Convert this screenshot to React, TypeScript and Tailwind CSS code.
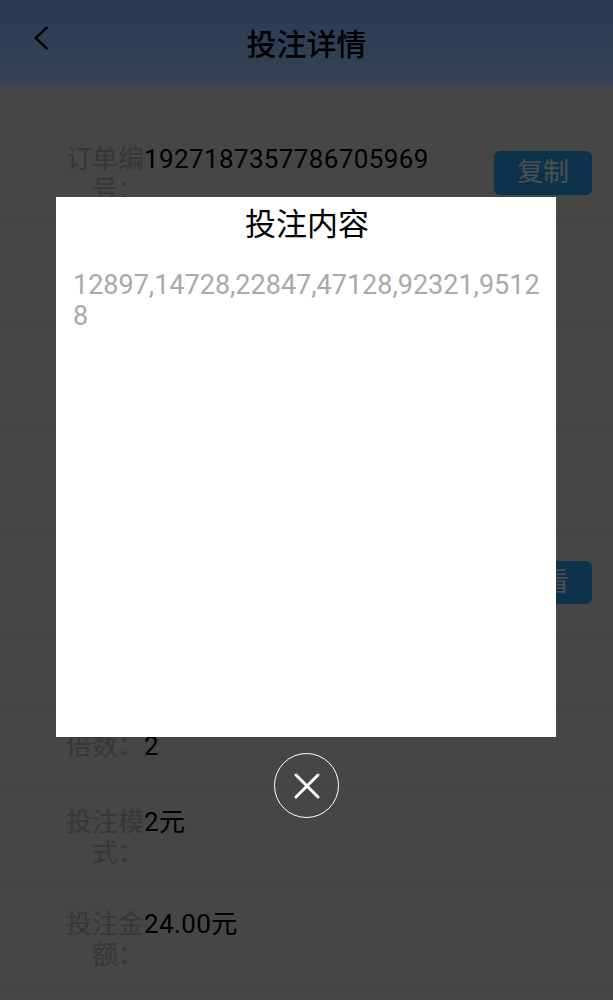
import React from 'react';

const FONT = 'font-["Roboto","Noto_Sans_CJK_SC",sans-serif]';

type RowProps = {
  label: string;
  value?: string;
  action?: string;
  tall?: boolean;
};

const rows: RowProps[] = [
  { label: '订单编号：', value: '1927187357786705969', action: '复制', tall: true },
  { label: '投注时间：', value: '2025-05-21 10:12:30', tall: true },
  { label: '彩种名称：', value: '腾讯分分彩', tall: true },
  { label: '玩法名称：', value: '五星直选', tall: true },
  { label: '投注内容：', value: '12897,14728', action: '查看', tall: true },
  { label: '注数：', value: '6' },
  { label: '倍数：', value: '2' },
  { label: '投注模式：', value: '2元', tall: true },
  { label: '投注金额：', value: '24.00元', tall: true },
];

const Row = ({ label, value, action, tall }: RowProps) => (
  <div className={`flex items-start border-b border-[#bcbcbc] pl-[65px] pr-[21px] pt-[22px] ${tall ? 'h-[102.4px]' : 'h-[75.5px]'}`}>
    <span className="w-[79px] shrink-0 text-right text-[#9d9d9d]">{label}</span>
    <span className="flex-1 tracking-[0.37px] text-black">{value}</span>
    {action && (
      <button className="mt-[7px] h-[43.5px] w-[98px] rounded-[6px] bg-[#258fd9] text-[#e0e0e0]">{action}</button>
    )}
  </div>
);

export default function App() {
  return (
    <div className={`relative h-[1000px] w-[613px] overflow-hidden bg-[#c8c8c8] text-[26px] leading-[31px] ${FONT}`}>
      <header className="relative flex h-[87px] items-center justify-center bg-gradient-to-b from-[#78a6f3] to-[#9dc0f0] pt-[1px]">
        <svg className="absolute left-[30px] top-[22px]" width="24" height="32" viewBox="0 0 24 32" fill="none" stroke="black" strokeWidth="2.4" strokeLinecap="round" strokeLinejoin="round">
          <path d="M16.7 5.7L5.7 16L16.7 26.3" />
        </svg>
        <h1 className="text-[30px] font-medium text-black">投注详情</h1>
      </header>
      <main className="pt-[35px]">
        {rows.map((r) => (
          <Row key={r.label} {...r} />
        ))}
      </main>

      <div className="absolute inset-0 flex flex-col items-center bg-black/65 pr-[1px] pt-[197px]">
        <div className="h-[540px] w-[500px] bg-white pl-[17px] pr-[15px]">
          <h2 className="mt-[11px] text-center text-[31px] leading-[33px] text-black">投注内容</h2>
          <p className="mt-[29px] break-all text-[27px] text-[#a9a9a9]">12897,14728,22847,47128,92321,95128</p>
        </div>
        <button className="ml-[1px] mt-[16px] flex h-[65px] w-[65px] items-center justify-center rounded-full border-[1.5px] border-white">
          <svg width="28" height="28" viewBox="0 0 28 28" fill="none" stroke="white" strokeWidth="3" strokeLinecap="round">
            <path d="M3 3L25 25M25 3L3 25" />
          </svg>
        </button>
      </div>
    </div>
  );
}
